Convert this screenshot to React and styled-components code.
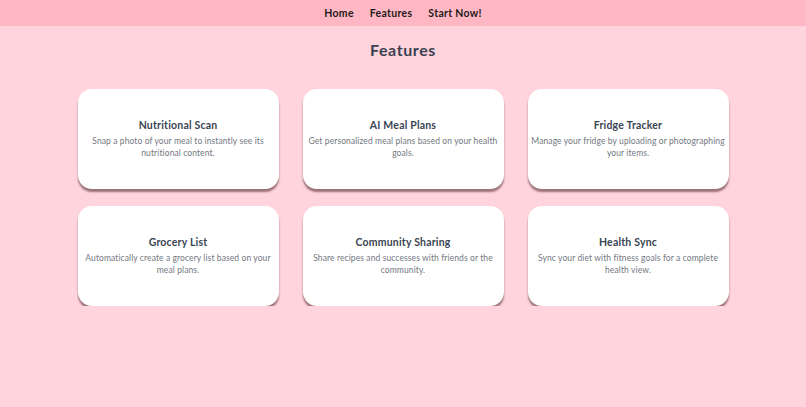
import React from 'react';
import styled, { createGlobalStyle } from 'styled-components';

const GlobalStyle = createGlobalStyle`
  * {
    box-sizing: border-box;
  }
  body {
    margin: 0;
    background-color: #ffd4dc;
    font-family: "Lato", "Open Sans", sans-serif;
  }
`;

const NavBar = styled.nav`
  background-color: #ffb8c3;
  height: 26px;
  display: flex;
  justify-content: center;
  align-items: center;

  ul {
    list-style-type: none;
    margin: 0;
    padding: 0;
    display: flex;
    gap: 16px;
  }

  ul li {
    font-size: 10.5px;
    font-weight: 700;
    color: #1f1a1c;
    letter-spacing: 0.3px;
  }
`;

const Section = styled.section`
  padding-top: 14px;
  display: flex;
  flex-direction: column;
  align-items: center;
`;

const Heading = styled.h2`
  margin: 0;
  font-size: 16px;
  font-weight: 700;
  color: #3a4150;
  letter-spacing: 0.6px;
`;

const Grid = styled.div`
  margin-top: 30px;
  display: grid;
  grid-template-columns: repeat(3, 201px);
  gap: 17px 24px;
`;

const Card = styled.div`
  background-color: #ffffff;
  height: 100px;
  border-radius: 14px;
  box-shadow: 0px 3px 2px rgba(120, 80, 85, 0.75);
  display: flex;
  flex-direction: column;
  justify-content: center;
  align-items: center;
  text-align: center;
  padding: 0 2px;
`;

const Title = styled.h3`
  margin: 0 0 4px;
  font-size: 10.5px;
  font-weight: 700;
  color: #3a4452;
  letter-spacing: 0.2px;
`;

const Desc = styled.p`
  margin: 0;
  font-size: 8.5px;
  line-height: 12px;
  color: #737882;
  letter-spacing: 0.1px;
`;

const features = [
  { title: 'Nutritional Scan', text: 'Snap a photo of your meal to instantly see its nutritional content.' },
  { title: 'AI Meal Plans', text: 'Get personalized meal plans based on your health goals.' },
  { title: 'Fridge Tracker', text: 'Manage your fridge by uploading or photographing your items.' },
  { title: 'Grocery List', text: 'Automatically create a grocery list based on your meal plans.' },
  { title: 'Community Sharing', text: 'Share recipes and successes with friends or the community.' },
  { title: 'Health Sync', text: 'Sync your diet with fitness goals for a complete health view.' },
];

export default function App() {
  return (
    <>
      <GlobalStyle />
      <NavBar>
        <ul>
          <li>Home</li>
          <li>Features</li>
          <li>Start Now!</li>
        </ul>
      </NavBar>
      <Section>
        <Heading>Features</Heading>
        <Grid>
          {features.map((f) => (
            <Card key={f.title}>
              <Title>{f.title}</Title>
              <Desc>{f.text}</Desc>
            </Card>
          ))}
        </Grid>
      </Section>
    </>
  );
}
